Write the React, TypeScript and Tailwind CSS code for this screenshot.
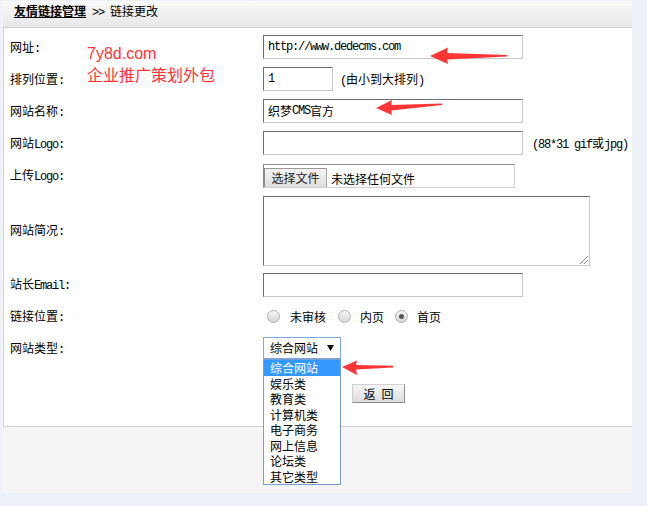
import React from "react";

const CJK_RE = /[\u2E80-\u9FFF\u3000-\u303F\uFF00-\uFFEF]/;
const SPLIT_RE = /[\u2E80-\u9FFF\u3000-\u303F\uFF00-\uFFEF]+|[^\u2E80-\u9FFF\u3000-\u303F\uFF00-\uFFEF]+/g;

function Mix({ t }: { t: string }) {
  const parts = t.match(SPLIT_RE) || [];
  return (
    <>
      {parts.map((p, i) =>
        CJK_RE.test(p) ? (
          <span key={i} className="font-['Noto_Sans_CJK_SC',sans-serif] text-[12px]">
            {p}
          </span>
        ) : (
          <span
            key={i}
            className="font-['Liberation_Mono',monospace] text-[12px] tracking-[-1.2px] whitespace-pre"
          >
            {p}
          </span>
        )
      )}
    </>
  );
}

function Label({ t }: { t: string }) {
  return (
    <div className="w-[259px] shrink-0 pl-[6px] leading-[16px] text-black">
      <Mix t={t} />
    </div>
  );
}

function Box({ w, children }: { w: string; children?: React.ReactNode }) {
  return (
    <div
      className={`${w} h-[24px] bg-white border border-t-[#6f6f6f] border-l-[#6f6f6f] border-r-[#c9c9c9] border-b-[#c9c9c9] flex items-center pl-[4px] leading-[16px] text-black`}
    >
      {children}
    </div>
  );
}

function Radio({ checked }: { checked?: boolean }) {
  return (
    <span className="w-[13px] h-[13px] rounded-full border border-[#b0b0b0] bg-linear-to-b from-[#f7f7f7] to-[#d6d6d6] flex items-center justify-center shrink-0">
      {checked && <span className="w-[5px] h-[5px] rounded-full bg-[#555]" />}
    </span>
  );
}

const items = ["综合网站", "娱乐类", "教育类", "计算机类", "电子商务", "网上信息", "论坛类", "其它类型"];

export default function App() {
  return (
    <div className="relative w-[647px] h-[506px] overflow-hidden bg-[#edf1fa] pt-[1px]">
      <div className="ml-[2px] w-[630px] h-[492px] bg-[#f5f5f5]">
        {/* header */}
        <div className="ml-[1px] h-[27px] border-b border-[#cfcfcf] bg-linear-to-b from-[#fafafa] to-[#e7e7e7] pl-[11px] pt-[1px] leading-[16px] text-black">
          <span className="font-bold underline font-['Noto_Sans_CJK_SC',sans-serif] text-[12px]">友情链接管理</span>
          <Mix t=" >> 链接更改" />
        </div>
        {/* body */}
        <div className="ml-[1px] h-[399px] bg-white border-l border-b border-[#d0d0d0] pt-[3px]">
          <div className="h-[32px] flex items-center">
            <Label t="网址:" />
            <Box w="w-[260px]">
              <Mix t="http://www.dedecms.com" />
            </Box>
          </div>
          <div className="h-[32px] flex items-center">
            <Label t="排列位置:" />
            <Box w="w-[70px]">
              <Mix t="1" />
            </Box>
            <div className="ml-[7px] leading-[16px] text-black">
              <Mix t="(由小到大排列)" />
            </div>
          </div>
          <div className="h-[32px] flex items-center">
            <Label t="网站名称:" />
            <Box w="w-[260px]">
              <Mix t="织梦CMS官方" />
            </Box>
          </div>
          <div className="h-[32px] flex items-center">
            <Label t="网站Logo:" />
            <Box w="w-[260px]" />
            <div className="ml-[9px] leading-[16px] text-black">
              <Mix t="(88*31 gif或jpg)" />
            </div>
          </div>
          <div className="h-[33px] flex items-center">
            <Label t="上传Logo:" />
            <div className="w-[252px] h-[24px] bg-white border border-t-[#8a8a8a] border-l-[#8a8a8a] border-r-[#d0d0d0] border-b-[#d0d0d0] flex items-end overflow-hidden">
              <div className="w-[63px] h-[20px] -mb-[1px] border border-t-[#9a9a9a] border-l-[#8a8a8a] border-r-[#a5a5a5] border-b-[#a5a5a5] bg-linear-to-b from-[#f4f4f4] to-[#dedede] flex items-center justify-center leading-[16px] text-[#222]">
                <Mix t="选择文件" />
              </div>
              <div className="ml-[4px] leading-[17px] text-black">
                <Mix t="未选择任何文件" />
              </div>
            </div>
          </div>
          <div className="h-[77px] flex items-center">
            <Label t="网站简况:" />
            <div className="relative w-[327px] h-[70px] bg-white border border-t-[#6f6f6f] border-l-[#6f6f6f] border-r-[#c9c9c9] border-b-[#c9c9c9]">
              <svg className="absolute right-[1px] bottom-[1px] w-[9px] h-[9px]" viewBox="0 0 9 9">
                <line x1="1" y1="9" x2="9" y2="1" stroke="#8a8a8a" strokeWidth="1" />
                <line x1="5" y1="9" x2="9" y2="5" stroke="#8a8a8a" strokeWidth="1" />
              </svg>
            </div>
          </div>
          <div className="h-[31px] flex items-center">
            <Label t="站长Email:" />
            <Box w="w-[260px]" />
          </div>
          <div className="h-[33px] flex items-center">
            <Label t="链接位置:" />
            <div className="flex items-center leading-[16px] text-black">
              <span className="ml-[4px]">
                <Radio />
              </span>
              <span className="ml-[10px]">
                <Mix t="未审核" />
              </span>
              <span className="ml-[12px]">
                <Radio />
              </span>
              <span className="ml-[9px]">
                <Mix t="内页" />
              </span>
              <span className="ml-[11px]">
                <Radio checked />
              </span>
              <span className="ml-[9px]">
                <Mix t="首页" />
              </span>
            </div>
          </div>
          <div className="h-[30px] flex items-center">
            <Label t="网站类型:" />
            <div className="relative w-[78px] h-[22px]">
              <div className="w-[78px] h-[22px] bg-white border border-[#7ea9dd] flex items-center pl-[6px] leading-[16px] text-black">
                <Mix t="综合网站" />
                <svg className="ml-auto mr-[6px] w-[7px] h-[6px]" viewBox="0 0 7 6">
                  <polygon points="0,0 7,0 3.5,6" fill="#111" />
                </svg>
              </div>
              <div className="absolute left-0 top-[22px] z-10 w-[78px] bg-white border border-[#7a9cd2]">
                {items.map((it, i) => (
                  <div
                    key={it}
                    className={
                      i === 0
                        ? "h-[15.5px] leading-[15.5px] pl-[6px] bg-[#3399ff] text-white"
                        : "h-[15.5px] leading-[15.5px] pl-[6px] text-black"
                    }
                  >
                    <span className="font-['Noto_Sans_CJK_SC',sans-serif] text-[12px]">{it}</span>
                  </div>
                ))}
              </div>
            </div>
          </div>
          <div className="flex pt-[21px]">
            <div className="w-[348px] shrink-0" />
            <button className="w-[53px] h-[19px] border border-t-[#d0d0d0] border-l-[#d0d0d0] border-r-[#8e8e8e] border-b-[#8e8e8e] bg-linear-to-b from-[#f6f6f6] to-[#dcdcdc] flex items-center justify-center leading-[16px] text-black">
              <Mix t="返 回" />
            </button>
          </div>
        </div>
      </div>

      {/* watermark */}
      <div className="absolute left-[87px] top-[45px] text-[#ff3333] pointer-events-none">
        <div className="font-['Liberation_Sans',sans-serif] text-[16px] leading-[18px]">7y8d.com</div>
        <div className="mt-[1px] font-['Noto_Sans_CJK_SC',sans-serif] text-[16px] leading-[20px]">企业推广策划外包</div>
      </div>

      {/* arrows */}
      <svg className="absolute left-0 top-0 w-[647px] h-[506px] pointer-events-none z-20" viewBox="0 0 647 506">
        <polygon
          points="430,56 448,47.5 447,53 507,55 507,56.5 447,59.5 448,64"
          fill="#ff3535"
        />
        <polygon
          points="376,108 392,100 391,105 442,103.5 442,105 391,110.5 392,115"
          fill="#ff3535"
        />
        <polygon
          points="342,367 357,360.5 356,365 393,365.8 393,367.5 356,369.5 357,375"
          fill="#ff3535"
        />
      </svg>
    </div>
  );
}
